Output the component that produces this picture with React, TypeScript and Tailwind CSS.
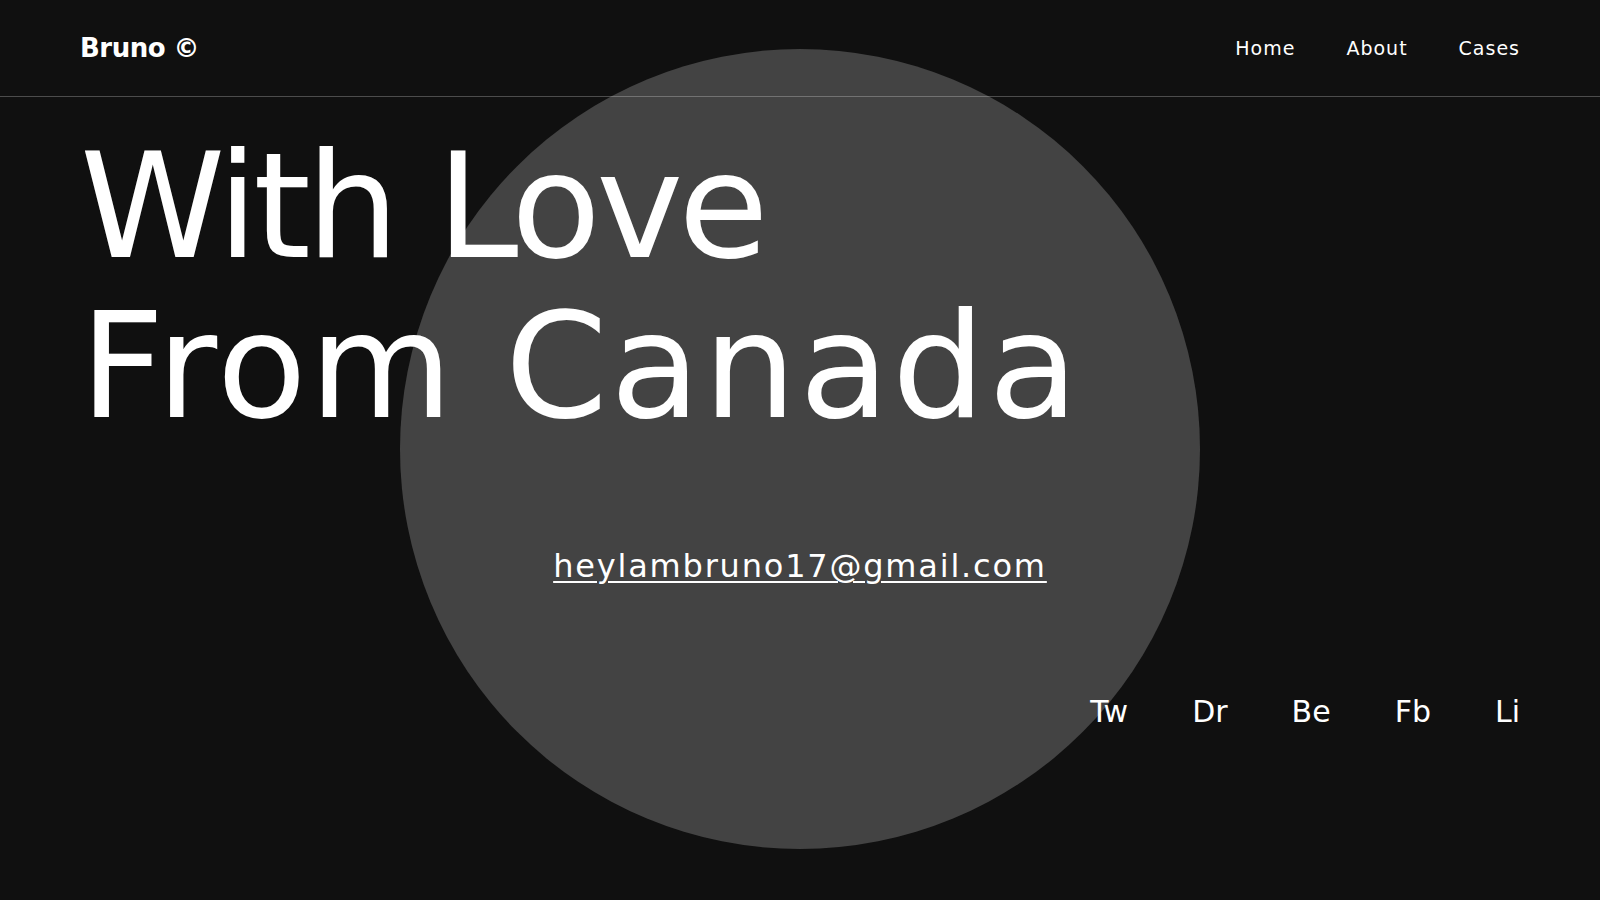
import React from "react";

export default function App() {
  const socials = ["Tw", "Dr", "Be", "Fb", "Li"];
  return (
    <div
      className="relative w-full h-[900px] overflow-hidden bg-[#101010] text-white"
      style={{ fontFamily: '"DejaVu Sans", "Liberation Sans", sans-serif' }}
    >
      <div className="absolute left-[400px] top-[49px] w-[800px] h-[800px] rounded-full bg-[#434343]" />

      <header className="relative z-10 h-[97px] flex items-center justify-between px-[80px] border-b border-white/25">
        <div className="text-[26px] font-bold tracking-[-0.5px] leading-none">Bruno ©</div>
        <nav className="flex items-center gap-[51px] text-[19px] tracking-[1px] leading-none">
          <a href="#">Home</a>
          <a href="#">About</a>
          <a href="#">Cases</a>
        </nav>
      </header>

      <main className="relative z-10">
        <h1 className="mt-[30px] pl-[80px] text-[147px] leading-[160px] font-normal">
          <div className="tracking-[-4.8px]">With Love</div>
          <div className="tracking-[2.8px]">From Canada</div>
        </h1>

        <div className="mt-[99px] flex justify-center">
          <a href="#" className="text-[32px] leading-[40px] tracking-[1.8px] underline underline-offset-[4px] decoration-[1.5px]">
            heylambruno17@gmail.com
          </a>
        </div>

        <div className="mt-[106px] flex justify-end gap-16 pr-[80px] text-[30px] leading-[40px]">
          {socials.map((s) => (
            <a key={s} href="#">
              {s}
            </a>
          ))}
        </div>
      </main>
    </div>
  );
}
